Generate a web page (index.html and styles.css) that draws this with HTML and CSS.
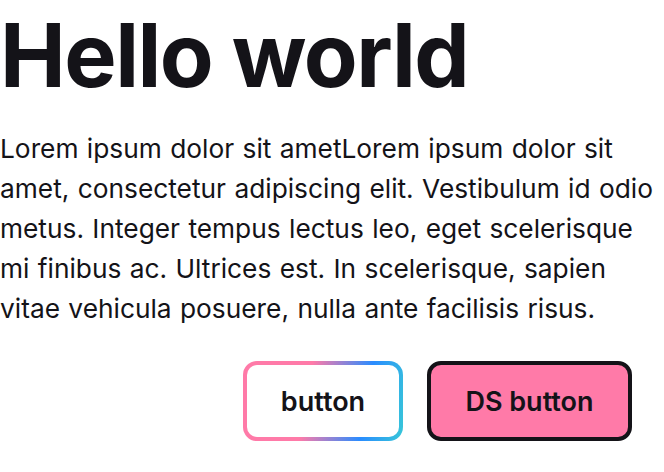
FILE: index.html
```html
<!DOCTYPE html>
<html>
<head>
<meta charset="utf-8">
<link rel="stylesheet" href="styles.css">
</head>
<body>
<main class="page">
  <h1 class="title">Hello world</h1>
  <p class="text">Lorem ipsum dolor sit ametLorem ipsum dolor sit amet, consectetur adipiscing elit. Vestibulum id odio metus. Integer tempus lectus leo, eget scelerisque mi finibus ac. Ultrices est. In scelerisque, sapien vitae vehicula posuere, nulla ante facilisis risus.</p>
  <div class="actions">
    <button class="btn btn-outline"><span>button</span></button>
    <button class="btn btn-ds">DS button</button>
  </div>
</main>
</body>
</html>
```
FILE: styles.css
```css
html, body {
  margin: 0;
  padding: 0;
  background: #ffffff;
}
.page {
  width: 664px;
  font-family: "Inter", "Lato", sans-serif;
  color: #141318;
}
.title {
  margin: 0;
  padding-top: 5px;
  font-size: 88px;
  line-height: 100px;
  font-weight: 700;
  letter-spacing: -1.5px;
}
.text {
  margin: 24px 0 0 0;
  font-size: 26.3px;
  line-height: 40px;
  font-weight: 400;
  word-spacing: 1px;
}
.actions {
  display: flex;
  justify-content: flex-end;
  gap: 24px;
  padding-right: 32px;
  margin-top: 32px;
}
.btn {
  font-family: inherit;
  font-size: 27px;
  font-weight: 600;
  color: #141318;
  height: 80px;
  border-radius: 14px;
  cursor: pointer;
}
.btn-outline {
  width: 160px;
  padding: 4px;
  border: none;
  background: linear-gradient(100deg, #ff7aa8 0%, #ff7aa8 40%, #2a8cff 75%, #37c7d8 100%);
}
.btn-outline span {
  display: flex;
  align-items: center;
  justify-content: center;
  height: 100%;
  background: #ffffff;
  border-radius: 10px;
}
.btn-ds {
  width: 205px;
  background: #ff7aa8;
  border: 4px solid #141318;
}
```
